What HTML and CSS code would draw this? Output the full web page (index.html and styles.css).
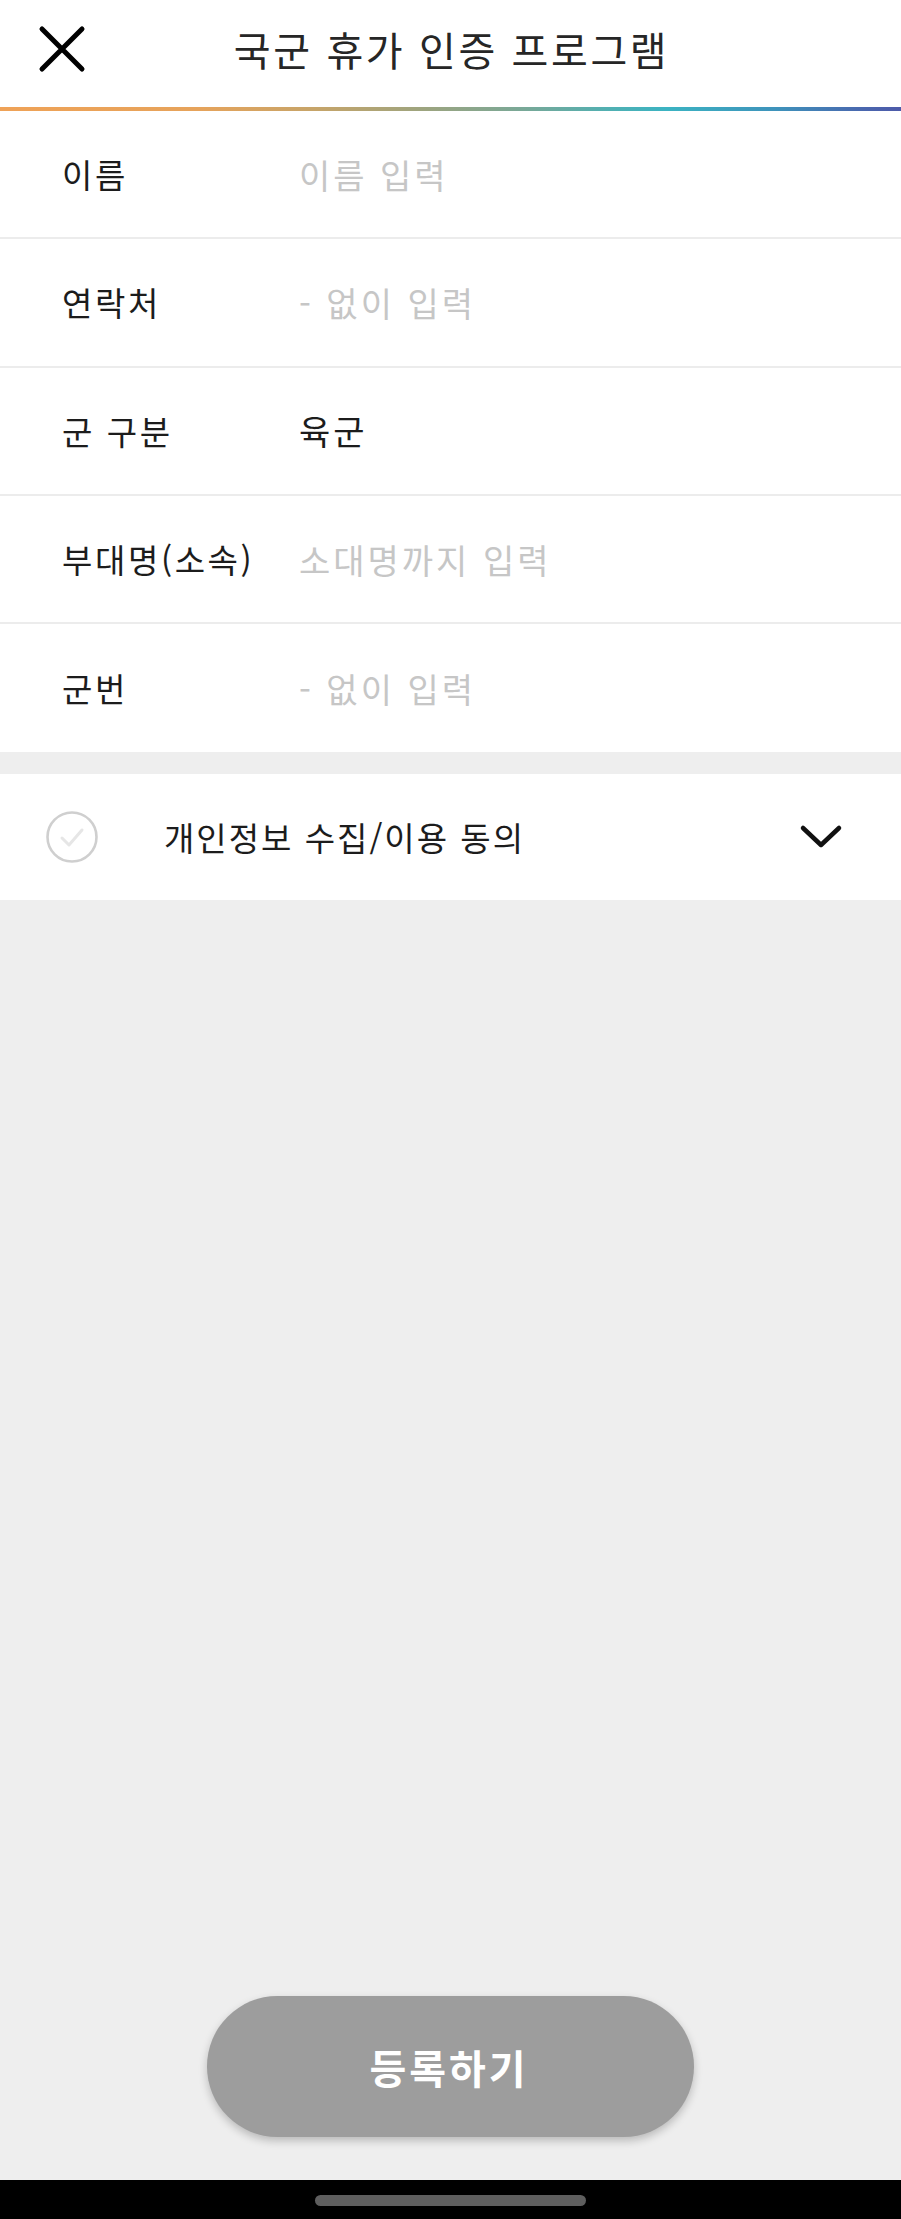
FILE: index.html
```html
<!DOCTYPE html>
<html lang="ko">
<head>
<meta charset="utf-8">
<title>국군 휴가 인증 프로그램</title>
<link rel="stylesheet" href="styles.css">
</head>
<body>
<div class="app">
  <header class="topbar">
    <button class="close" aria-label="닫기">
      <svg width="48" height="48" viewBox="0 0 48 48"><path d="M4 4 L44 44 M44 4 L4 44" stroke="#000" stroke-width="5" stroke-linecap="round" fill="none"/></svg>
    </button>
    <h1 class="title">국군 휴가 인증 프로그램</h1>
  </header>
  <div class="gradient"></div>

  <section class="form">
    <div class="row"><span class="label">이름</span><span class="value placeholder">이름 입력</span></div>
    <div class="row"><span class="label">연락처</span><span class="value placeholder">- 없이 입력</span></div>
    <div class="row"><span class="label">군 구분</span><span class="value">육군</span></div>
    <div class="row"><span class="label">부대명(소속)</span><span class="value placeholder">소대명까지 입력</span></div>
    <div class="row last"><span class="label">군번</span><span class="value placeholder">- 없이 입력</span></div>
  </section>

  <section class="agree">
    <span class="check">
      <svg width="52" height="52" viewBox="0 0 52 52"><circle cx="26" cy="26" r="24.5" fill="none" stroke="#cfcfcf" stroke-width="2.6"/><path d="M16 27 L23 34 L36 19" fill="none" stroke="#e6e6e6" stroke-width="3" stroke-linecap="round" stroke-linejoin="round"/></svg>
    </span>
    <span class="agree-text">개인정보 수집/이용 동의</span>
    <span class="chevron">
      <svg width="44" height="28" viewBox="0 0 44 28"><path d="M4 5 L22 22 L40 5" fill="none" stroke="#111" stroke-width="4.5" stroke-linecap="round" stroke-linejoin="round"/></svg>
    </span>
  </section>

  <div class="spacer"></div>

  <div class="actions">
    <button class="submit">등록하기</button>
  </div>

  <footer class="navbar"><span class="handle"></span></footer>
</div>
</body>
</html>
```

FILE: styles.css
```css
* { box-sizing: border-box; }
html, body { margin: 0; padding: 0; }
body {
  background: #eeeeee;
  font-family: "Noto Sans CJK KR", "Noto Sans", sans-serif;
  color: #1c1c1c;
}
.app {
  display: flex;
  flex-direction: column;
  min-height: 2219px;
}
.topbar {
  height: 107px;
  background: #fff;
  display: flex;
  align-items: center;
  justify-content: center;
  position: relative;
}
.close {
  position: absolute;
  left: 38px;
  top: 25px;
  width: 48px;
  height: 48px;
  padding: 0;
  border: 0;
  background: none;
  display: flex;
}
.title {
  margin: 0;
  font-size: 40px;
  font-weight: 400;
  letter-spacing: 2.6px;
  color: #262626;
  line-height: 1;
  margin-top: -10px;
  padding-left: 2px;
}
.gradient {
  height: 4px;
  background: linear-gradient(90deg, #efa257 0%, #e6a35b 22%, #c6a469 35%, #9da47f 47%, #79a897 58%, #4fb0b3 68%, #3bb3c2 74%, #3e93bb 86%, #4a66ae 96%, #4d5aa9 100%);
}
.form { background: #fff; }
.row {
  height: 128.3px;
  display: flex;
  align-items: center;
  padding-left: 62px;
  border-bottom: 2px solid #ececec;
}
.row.last { border-bottom: 0; }
.label {
  width: 237px;
  font-size: 33px;
  letter-spacing: 2.6px;
  color: #1c1c1c;
}
.value {
  font-size: 34px;
  letter-spacing: 3px;
  color: #1c1c1c;
}
.placeholder { color: #c6c6c6; }
.agree {
  margin-top: 22px;
  height: 126px;
  background: #fff;
  display: flex;
  align-items: center;
  padding-left: 46px;
  padding-right: 58px;
}
.check { display: flex; width: 118px; }
.agree-text {
  flex: 1;
  font-size: 33px;
  letter-spacing: 2px;
  color: #1c1c1c;
}
.chevron { display: flex; }
.spacer { flex: 1; }
.actions {
  display: flex;
  justify-content: center;
  padding-bottom: 43px;
}
.submit {
  width: 487px;
  height: 141px;
  border: 0;
  border-radius: 71px;
  background: #9d9d9d;
  color: #fff;
  font-family: "Noto Sans CJK KR", "Noto Sans", sans-serif;
  font-size: 40px;
  font-weight: 700;
  letter-spacing: 3px;
  padding-left: 3px;
  box-shadow: 0 4px 8px rgba(0,0,0,0.22);
}
.navbar {
  height: 39px;
  background: #000;
  display: flex;
  justify-content: center;
  padding-top: 15px;
}
.handle {
  width: 271px;
  height: 11px;
  border-radius: 6px;
  background: #5e5e5e;
}
```
